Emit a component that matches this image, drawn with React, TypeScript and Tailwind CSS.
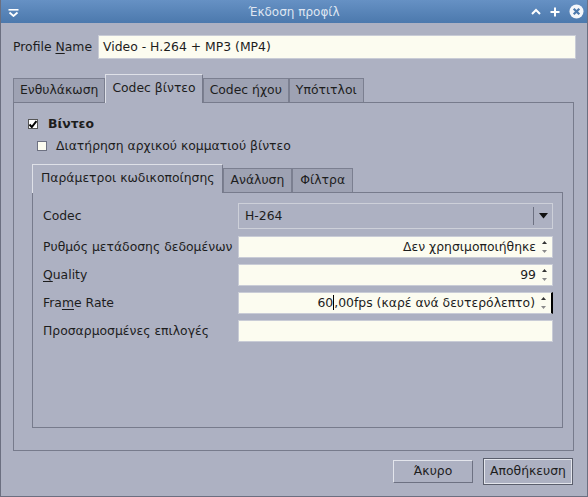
import React from "react";

const font = { fontFamily: '"DejaVu Sans", "Noto Sans", sans-serif' };

function SpinArrows() {
  return (
    <svg width="7" height="16" viewBox="0 0 7 16" className="shrink-0">
      <path d="M1 5 L3.5 2 L6 5 Z" fill="#333" />
      <path d="M1 11 L3.5 14 L6 11 Z" fill="#8a8a8a" />
    </svg>
  );
}

function SpinField({ children, focused }: { children: React.ReactNode; focused?: boolean }) {
  return (
    <div
      className={`h-[22px] bg-[#fcfcf0] border border-[#c9ccd6] flex items-center justify-end pl-2 pr-[4px] gap-[5px] ${
        focused ? "border-r-2 border-r-black" : ""
      }`}
    >
      <span className="whitespace-nowrap flex items-center">{children}</span>
      <SpinArrows />
    </div>
  );
}

function Tab({ label, active, tight }: { label: string; active?: boolean; tight?: boolean }) {
  return active ? (
    <div
      className={`relative z-10 -mb-px h-[29px] flex items-center bg-[#adb1c2] border-t border-l border-[#dfe1e8] border-r border-r-[#767a8b] pb-[2px] ${
        tight ? "px-[6px]" : "pl-[8px] pr-[7px]"
      }`}
    >
      {label}
    </div>
  ) : (
    <div
      className={`h-[24px] flex items-center bg-[#9ea2b3] border-t border-l border-r border-[#7b7f90] ${
        tight ? "px-[6px]" : "px-[7px]"
      }`}
    >
      {label}
    </div>
  );
}

export default function App() {
  return (
    <div
      style={font}
      className="w-[588px] h-[497px] bg-[#adb1c2] text-[12.4px] text-[#1d1d1d] flex flex-col border-l border-r border-b border-[#6b6f80] overflow-hidden"
    >
      {/* title bar */}
      <div className="h-[23px] shrink-0 bg-gradient-to-b from-[#6691c4] to-[#4c79ad] relative flex items-center justify-center">
        <svg width="11" height="8" viewBox="0 0 11 8" className="absolute left-[7px] top-[9px]">
          <path d="M0.5 0.8 H10.5" stroke="#fff" strokeWidth="1.6" />
          <path d="M1.5 3.5 L5.5 7 L9.5 3.5" stroke="#fff" strokeWidth="1.8" fill="none" />
        </svg>
        <span className="text-[12px] text-[#dfe6f2]">Έκδοση προφίλ</span>
        <div className="absolute right-[3px] top-[4px] flex items-center gap-[9px]">
          <svg width="10" height="8" viewBox="0 0 10 8">
            <path d="M1 6 L5 2 L9 6" stroke="#fff" strokeWidth="2" fill="none" />
          </svg>
          <svg width="10" height="10" viewBox="0 0 10 10">
            <path d="M5 0.5 V9.5 M0.5 5 H9.5" stroke="#fff" strokeWidth="2" />
          </svg>
          <svg width="15" height="15" viewBox="0 0 15 15">
            <circle cx="7.5" cy="7.5" r="7" fill="#f4f6fa" />
            <path d="M4.7 4.7 L10.3 10.3 M10.3 4.7 L4.7 10.3" stroke="#4c79ad" strokeWidth="2.2" />
          </svg>
        </div>
      </div>

      {/* profile name */}
      <div className="mt-[12px] h-[24px] flex items-center pl-[12px] pr-[11px] gap-[6px]">
        <span>
          Profile <span className="underline underline-offset-2">N</span>ame
        </span>
        <div className="flex-1 h-[24px] bg-[#fcfcf0] border border-[#c9ccd6] flex items-center px-[4px]">
          Video - H.264 + MP3 (MP4)
        </div>
      </div>

      {/* outer tabs */}
      <div className="mt-[15px] ml-[12px] mr-[13px] flex flex-col">
        <div className="flex items-end h-[28px]">
          <Tab label="Ενθυλάκωση" tight />
          <Tab label="Codec βίντεο" active tight />
          <Tab label="Codec ήχου" tight />
          <Tab label="Υπότιτλοι" tight />
        </div>
        <div className="h-[349px] border border-[#777b8c] flex flex-col">
          <div className="mt-[14px] ml-[14px] flex items-center gap-[10px] h-[14px]">
            <div className="w-[10px] h-[10px] bg-white border border-[#555] flex items-center justify-center">
              <svg width="8" height="8" viewBox="0 0 8 8">
                <path d="M0.5 4.5 L2.8 7 L7.5 1" stroke="#000" strokeWidth="2" fill="none" />
              </svg>
            </div>
            <span className="font-bold">Βίντεο</span>
          </div>
          <div className="mt-[8px] ml-[23px] flex items-center gap-[9px] h-[14px]">
            <div className="w-[10px] h-[10px] bg-[#fcfcf0] border border-[#6d7182]" />
            <span>Διατήρηση αρχικού κομματιού βίντεο</span>
          </div>

          {/* inner tabs */}
          <div className="mt-[11px] ml-[18px] mr-[10px] flex flex-col">
            <div className="flex items-end h-[28px]">
              <Tab label="Παράμετροι κωδικοποίησης" active />
              <Tab label="Ανάλυση" />
              <Tab label="Φίλτρα" />
            </div>
            <div className="h-[236px] border border-[#777b8c] pt-[10px] pl-[10px] pr-[9px]">
              <div className="grid grid-cols-[195px_1fr] gap-y-[6px] items-center">
                <span>Codec</span>
                <div className="h-[26px] border border-[#cdd0d9] flex items-center mb-px">
                  <span className="flex-1 px-[6px]">H-264</span>
                  <div className="h-[18px] w-px bg-[#6d7182]" />
                  <div className="w-[18px] flex justify-center">
                    <svg width="9" height="6" viewBox="0 0 9 6">
                      <path d="M0 0 H9 L4.5 5.5 Z" fill="#111" />
                    </svg>
                  </div>
                </div>

                <span>Ρυθμός μετάδοσης δεδομένων</span>
                <SpinField>Δεν χρησιμοποιήθηκε</SpinField>

                <span>
                  <span className="underline underline-offset-2">Q</span>uality
                </span>
                <SpinField>99</SpinField>

                <span>
                  Fra<span className="underline underline-offset-2">m</span>e Rate
                </span>
                <SpinField focused>
                  60<span className="inline-block w-px h-[15px] bg-black" />,00fps (καρέ ανά δευτερόλεπτο)
                </SpinField>

                <span>Προσαρμοσμένες επιλογές</span>
                <div className="h-[22px] bg-[#fcfcf0] border border-[#c9ccd6]" />
              </div>
            </div>
          </div>
        </div>
      </div>

      {/* buttons */}
      <div className="mt-[7px] mr-[14px] flex justify-end items-center gap-[10px]">
        <button className="w-[80px] h-[23px] border border-t-[#e3e5ec] border-l-[#e3e5ec] border-b-[#6d7182] border-r-[#6d7182] bg-[#adb1c2]">
          Άκυρο
        </button>
        <div className="border border-[#5a5e6c]">
          <button className="w-[88px] h-[25px] border border-[#e3e5ec] bg-[#adb1c2]">Αποθήκευση</button>
        </div>
      </div>
    </div>
  );
}
